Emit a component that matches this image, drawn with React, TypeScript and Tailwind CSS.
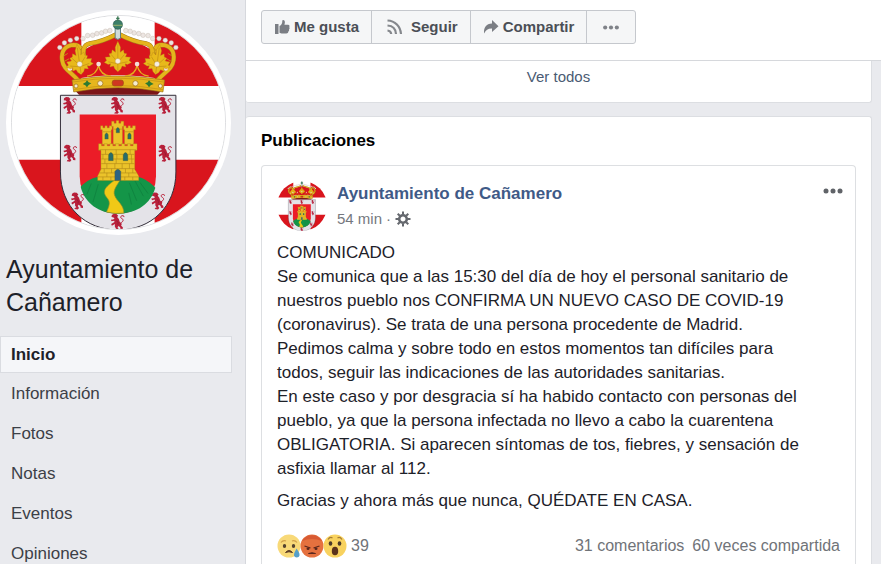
import type { ReactNode } from "react";
import clsx from "clsx";

const NAV_ITEMS = [
  "Inicio",
  "Información",
  "Fotos",
  "Notas",
  "Eventos",
  "Opiniones",
];

const POST_LINES = [
  "COMUNICADO",
  "Se comunica que a las 15:30 del día de hoy el personal sanitario de",
  "nuestros pueblo nos CONFIRMA UN NUEVO CASO DE COVID-19",
  "(coronavirus). Se trata de una persona procedente de Madrid.",
  "Pedimos calma y sobre todo en estos momentos tan difíciles para",
  "todos, seguir las indicaciones de las autoridades sanitarias.",
  "En este caso y por desgracia sí ha habido contacto con personas del",
  "pueblo, ya que la persona infectada no llevo a cabo la cuarentena",
  "OBLIGATORIA. Si aparecen síntomas de tos, fiebres, y sensación de",
  "asfixia llamar al 112.",
];

const LIONS = [
  [210, 314],
  [354, 314],
  [497, 314],
  [211, 458],
  [497, 458],
  [234, 602],
  [476, 602],
  [354, 666],
];

// left half of the crown's pearls, mirrored around x = 355
const PEARLS = [
  [180, 140],
  [194, 126],
  [212, 118],
  [231, 113],
  [250, 113],
  [264, 104],
  [279, 103],
  [292, 98],
  [306, 96],
  [318, 91],
  [331, 89],
];

function Lion({ x, y }: { x: number; y: number }) {
  return (
    <g transform={`translate(${x} ${y})`}>
      <path
        d="M-17 -21 L-11 -25 L-3 -24 L2 -19 L-1 -15 L4 -9 L7 0 L13 5 L11 11 L16 16 L16 22 L9 21 L8 16 L3 12 L0 16 L4 22 L0 26 L-10 25 L-8 21 L-4 20 L-8 14 L-8 6 L-17 11 L-19 6 L-14 3 L-9 0 L-10 -4 L-18 -2 L-20 -7 L-13 -8 L-9 -11 L-12 -14 L-18 -15 Z"
        fill="#b8203a"
      />
      <path
        d="M9 3 C19 -2 19 -8 12 -11 C7 -14 10 -20 17 -19 M17 -20 L20 -15"
        fill="none"
        stroke="#b8203a"
        strokeWidth="3"
      />
      <path d="M-6 -17 L-2 -14 M-3 -5 L2 2 L1 8" fill="none" stroke="#8a1a30" strokeWidth="2" />
    </g>
  );
}

function Leaf({ x, y, tilt }: { x: number; y: number; tilt: number }) {
  return (
    <g transform={`translate(${x} ${y}) rotate(${tilt})`}>
      <path
        d="M0 -60 L8 -42 L7 -27 L17 -34 L19 -24 L27 -22 L23 -13 L38 -12 L34 -2 L41 4 L29 10 L22 8 L24 18 L13 15 L9 24 L0 32 L-9 24 L-13 15 L-24 18 L-22 8 L-29 10 L-41 4 L-34 -2 L-38 -12 L-23 -13 L-27 -22 L-19 -24 L-17 -34 L-7 -27 L-8 -42 Z"
        fill="#e8b91b"
        stroke="#b98516"
        strokeWidth="1"
        strokeLinejoin="round"
      />
      <path
        d="M0 -50 V28 M0 4 L-20 -20 M0 4 L20 -20 M0 8 L-29 2 M0 8 L29 2"
        fill="none"
        stroke="#c18f15"
        strokeWidth="2"
      />
      <circle r="8" fill="#f6eee0" stroke="#b08a3a" strokeWidth="1" />
    </g>
  );
}

function HalfCrown() {
  return (
    <>
      <path
        d="M236 240 C218 216 190 206 187 178 C183 150 198 133 222 132 C243 132 246 147 250 172"
        fill="none"
        stroke="#a67c1a"
        strokeWidth="14"
      />
      <path
        d="M236 240 C218 216 190 206 187 178 C183 150 198 133 222 132 C243 132 246 147 250 172"
        fill="none"
        stroke="#e5b41c"
        strokeWidth="11"
      />
      <path
        d="M254 172 C248 150 251 132 270 128 C295 124 319 117 349 101"
        fill="none"
        stroke="#a67c1a"
        strokeWidth="14"
      />
      <path
        d="M254 172 C248 150 251 132 270 128 C295 124 319 117 349 101"
        fill="none"
        stroke="#e5b41c"
        strokeWidth="11"
      />
      <path
        d="M192 165 L204 158 M193 182 L208 174 M203 198 L218 188 M214 208 L227 201 M248 140 L236 154"
        stroke="#c18f15"
        strokeWidth="3"
      />
      <path
        d="M262 226 Q290 224 297 194 Q302 224 334 226"
        fill="none"
        stroke="#e3b01c"
        strokeWidth="4"
      />
      {PEARLS.map(([x, y]) => (
        <circle key={x} cx={x} cy={y} r="7" fill="#ece5e2" stroke="#b5aa9b" strokeWidth="1" />
      ))}
      <circle cx="297" cy="190" r="7" fill="#f3dcd8" />
      <circle cx="211" cy="203" r="7" fill="#f3dcd8" />
    </>
  );
}

function Crest({ className }: { className?: string }) {
  return (
    <svg viewBox="36 45 642 642" className={className} role="img" aria-label="Escudo de Cañamero">
      <path d="M36 45H678V687H36Z" fill="#fff" />
      <path
        d="M36 45H245V256H36Z M466 45H678V256H466Z M36 478H245V687H36Z M466 478H678V687H466Z"
        fill="#d9151d"
      />

      {/* shield */}
      <path
        d="M182 284H530V515C530 620 455 690 356 690C257 690 182 620 182 515Z"
        fill="#e4e3e8"
        stroke="#322c38"
        strokeWidth="3"
      />
      {LIONS.map(([x, y]) => (
        <Lion key={`${x}-${y}`} x={x} y={y} />
      ))}
      <path d="M240 342H470V528A115 113 0 0 1 240 528Z" fill="#ec1c27" />
      <path
        d="M243 560C260 541 281 532 300 529H412C432 533 454 547 468 563C455 610 413 641 355 641C296 641 255 608 243 560Z"
        fill="#149548"
      />
      <path
        d="M275 550L262 582 M296 552L280 606 M390 548L412 602 M406 541L432 588 M422 547L446 580 M388 578L396 613"
        fill="none"
        stroke="#0d7c3c"
        strokeWidth="2"
      />
      <path
        d="M344 541H361C352 556 340 570 345 585C351 603 374 614 373 639Q348 643 321 636C328 619 334 608 324 595C304 573 318 560 344 541Z"
        fill="#f0c917"
        stroke="#96912a"
        strokeWidth="2"
      />

      {/* castle */}
      <g fill="#ebc32a" stroke="#a37f17" strokeWidth="1">
        <path d="M303 376H310V382H316V376H323V382H329V376H338V388H335V432H308V388H303Z" />
        <path d="M372 376H380V382H386V376H393V382H399V376H408V388H403V432H375V388H372Z" />
        <path d="M336 362H344V368H350V360H358V368H364V362H373V378H369V432H341V378H336Z" />
        <path d="M297 430H306V436H314V430H323V436H331V430H340V436H348V430H358V436H366V430H376V436H384V430H393V436H401V430H413V450H406V507L418 527V541H294V527L304 507V450H297Z" />
      </g>
      <path
        d="M300 448H410 M305 462H405 M305 476H405 M305 490H405 M304 505H407 M299 518H412 M295 530H417 M318 448V462 M350 448V462 M392 448V462 M310 462V476 M352 462V476 M396 462V476 M316 476V490 M350 476V490 M397 476V490 M322 490V505 M346 490V505 M368 490V505 M390 490V505 M314 505V518 M336 505V518 M378 505V518 M400 505V518 M322 518V530 M388 518V530 M310 530V541 M334 530V541 M376 530V541 M400 530V541 M310 394H334 M376 394H402 M343 386H368"
        fill="none"
        stroke="#b48c18"
        strokeWidth="2"
      />
      <g fill="#286c69" stroke="#5c5a1d" strokeWidth="1">
        <path d="M316 416V403Q321 392 326 403V416Z M385 416V403Q390 392 395 403V416Z M350 397V386Q355 376 360 386V397Z" />
        <path d="M327 481V464Q334 449 341 464V481Z M371 481V464Q378 449 385 464V481Z" />
        <path d="M346 541V514Q355 500 364 514V541Z" fill="#2b6383" />
      </g>

      {/* crown */}
      <path d="M252 150Q268 132 355 107Q442 132 458 150L488 235Q355 212 222 235Z" fill="#d9151d" />
      <path d="M228 272Q355 248 484 272L474 282H238Z" fill="#7c1518" />
      <HalfCrown />
      <g transform="translate(710 0) scale(-1 1)">
        <HalfCrown />
      </g>
      <Leaf x={240} y={190} tilt={-8} />
      <Leaf x={473} y={190} tilt={8} />
      <Leaf x={355} y={181} tilt={0} />
      <path
        d="M217 238Q355 214 496 238L491 274Q355 248 222 274Z"
        fill="#e6b61d"
        stroke="#9c741a"
        strokeWidth="2"
      />
      <path
        d="M219 244Q355 221 494 244 M222 267Q355 242 491 267"
        fill="none"
        stroke="#c08e13"
        strokeWidth="2"
      />
      <rect x="338" y="238" width="34" height="18" rx="7" fill="#cf3721" stroke="#9a5a12" strokeWidth="2" />
      <path
        d="M249 250L258 245L262 239L267 245L275 248L267 253L262 260L257 254Z M437 248L445 245L449 239L454 245L463 250L454 254L449 260L444 253Z"
        fill="#2c7a31"
      />
      {[302, 408].map((x) => (
        <circle key={x} cx={x} cy="248" r="8" fill="#f5eccf" stroke="#9b6b12" strokeWidth="2" />
      ))}
      <circle cx="229" cy="256" r="6" fill="#f5eccf" stroke="#9b6b12" strokeWidth="2" />
      <circle cx="483" cy="256" r="6" fill="#f5eccf" stroke="#9b6b12" strokeWidth="2" />
      <path d="M347 81H363V112Q355 119 347 112Z" fill="#cfdbd9" stroke="#5e7c82" strokeWidth="3" />
      <circle cx="355" cy="71" r="14" fill="#3b7f68" stroke="#2d5a50" strokeWidth="2" />
      <path d="M341 73H369" stroke="#9db36a" strokeWidth="3" />
      <path d="M355 46V60 M350 52H360" stroke="#3d7a55" strokeWidth="4" />
    </svg>
  );
}

function Dots({ className }: { className?: string }) {
  return (
    <svg viewBox="0 0 20 6" className={className} fill="currentColor" aria-hidden="true">
      <circle cx="3" cy="3" r="2.5" />
      <circle cx="10" cy="3" r="2.5" />
      <circle cx="17" cy="3" r="2.5" />
    </svg>
  );
}

function LikeIcon() {
  return (
    <svg viewBox="0 0 16 16" className="size-4" fill="#7b7e84" aria-hidden="true">
      <path d="M1 5H4.5V15H1Z" />
      <path d="M5.5 7C7.500 6 8.300 4.500 8.300 2C8.300 .6 10.900 .6 10.900 3.300C10.900 4.300 10.600 5 10.400 5.700H14C15.700 5.700 15.900 7.500 15.200 8.100C15.900 8.900 15.600 10.200 15 10.500C15.300 11.400 14.900 12.300 14.300 12.600C14.400 13.900 13.500 14.500 12.300 14.500H8.500C7 14.500 6.500 13.800 5.500 13.700Z" />
    </svg>
  );
}

function FollowIcon() {
  return (
    <svg viewBox="0 0 17 16" className="h-4 w-[17px]" fill="none" stroke="#85888d" aria-hidden="true">
      <path d="M1.500 1.500C9 1.800 14.500 7.500 15 15" strokeWidth="2.200" />
      <path d="M1.500 6.500C6.500 6.800 9.700 10 10 15" strokeWidth="2.200" />
      <path d="M1.500 11.500C4 11.700 5 13 5.200 15" strokeWidth="2.200" />
    </svg>
  );
}

function ShareIcon() {
  return (
    <svg viewBox="0 0 16 16" className="size-4" fill="#7b7e84" aria-hidden="true">
      <path d="M9 1L15.500 7.200L9 13V9.600C5.300 9.400 2.800 11 1.200 14.500C.2 9 3.200 4.700 9 4.500Z" />
    </svg>
  );
}

function GearIcon() {
  return (
    <svg viewBox="-8 -8 16 16" className="size-4" fill="none" stroke="#65686e" aria-hidden="true">
      <circle r="3.800" strokeWidth="2.600" />
      <path
        d="M0 -4.500V-7.500 M0 4.500V7.500 M4.500 0H7.500 M-4.500 0H-7.500 M3.200 3.200L5.300 5.300 M-3.200 3.200L-5.300 5.300 M3.200 -3.200L5.300 -5.300 M-3.200 -3.200L-5.300 -5.300"
        strokeWidth="2"
      />
    </svg>
  );
}

function SadFace() {
  return (
    <svg viewBox="0 0 24 24" className="size-6" role="img" aria-label="Me entristece">
      <circle cx="12" cy="12" r="11.500" fill="#f8d978" />
      <path d="M4 8.500Q6 6 9 7 M15 7Q18 6 20 8.500" fill="none" stroke="#d0a049" strokeWidth="1.200" />
      <ellipse cx="7.500" cy="12" rx="1.700" ry="1.900" fill="#54432f" />
      <ellipse cx="16.500" cy="12" rx="1.700" ry="1.900" fill="#54432f" />
      <path d="M8.500 18.500Q12 14.500 15.500 18.500Q12 17 8.500 18.500Z" fill="#5a3a24" stroke="#5a3a24" />
      <path d="M19.500 14.500C21 17 23 19 22.500 21.500C22 24 17.500 24 17 21.500C16.700 19 18.500 17 19.500 14.500Z" fill="#569fc9" />
    </svg>
  );
}

function AngryFace() {
  return (
    <svg viewBox="0 0 24 24" className="size-6" role="img" aria-label="Me enfada">
      <circle cx="12" cy="12" r="11.500" fill="#e5713f" />
      <path d="M2 7A11.500 11.500 0 0 1 22 7Q12 3 2 7Z" fill="#d85a33" />
      <path d="M4.500 12L10.500 14 M19.500 12L13.500 14" stroke="#5a271d" strokeWidth="1.300" />
      <ellipse cx="8" cy="14.700" rx="1.500" ry="1.300" fill="#5a271d" />
      <ellipse cx="16" cy="14.700" rx="1.500" ry="1.300" fill="#5a271d" />
      <path d="M8.500 19.500Q12 18 15.500 19.500Z" fill="#5a271d" stroke="#5a271d" />
    </svg>
  );
}

function WowFace() {
  return (
    <svg viewBox="0 0 24 24" className="size-6" role="img" aria-label="Me asombra">
      <circle cx="12" cy="12" r="11.500" fill="#f8d25f" />
      <path d="M5 5.500Q7 2.500 9.500 4 M14.500 4Q17 2.500 19 5.500" fill="none" stroke="#a37a35" strokeWidth="1.200" />
      <ellipse cx="7.500" cy="9.500" rx="1.800" ry="2.200" fill="#4b3a2a" />
      <ellipse cx="16.500" cy="9.500" rx="1.800" ry="2.200" fill="#4b3a2a" />
      <ellipse cx="12" cy="17" rx="3.200" ry="4.300" fill="#5a321c" />
    </svg>
  );
}

function ActionButton({
  className,
  label,
  children,
}: {
  className?: string;
  label?: string;
  children: ReactNode;
}) {
  return (
    <button
      type="button"
      aria-label={label}
      className={clsx(
        "flex h-8 items-center border-r border-[#c5c8cd] last:border-r-0",
        className
      )}
    >
      {children}
    </button>
  );
}

function Sidebar() {
  return (
    <aside className="w-[246px] shrink-0 border-r border-[#d6d8dd] pt-[10px]">
      <div className="ml-[6px] size-[225px] rounded-full bg-white p-[5px]">
        <Crest className="size-full rounded-full border border-[#dcdde0]" />
      </div>
      <h1 className="mt-[18px] px-[6px] text-[25px] leading-[33px] text-[#1d2129]">
        Ayuntamiento de Cañamero
      </h1>
      <nav className="mt-[17px] mr-[13px]">
        <ul className="flex flex-col gap-[2px]">
          {NAV_ITEMS.map((item, i) => (
            <li key={item}>
              <a
                href="#"
                aria-current={i === 0 ? "page" : undefined}
                className={clsx(
                  "flex items-center border px-[10px] text-[17px] leading-6",
                  i === 0
                    ? "h-[37px] border-[#dadce1] bg-[#f5f6f9] font-bold text-[#1d2129]"
                    : "h-[38px] border-transparent text-[#3c4047]"
                )}
              >
                {item}
              </a>
            </li>
          ))}
        </ul>
      </nav>
    </aside>
  );
}

function Post() {
  return (
    <article className="mt-3 grow rounded-t-[4px] border border-b-0 border-[#dddfe2] px-[15px] pt-[15px]">
      <header className="flex">
        <Crest className="size-[50px] rounded-full" />
        <div className="ml-[10px] grow">
          <a href="#" className="block text-[17px] leading-[25px] font-bold text-[#3f5a87]">
            Ayuntamiento de Cañamero
          </a>
          <div className="flex items-center text-[15px] leading-[25px] text-[#75787e]">
            54 min<span className="mx-1">·</span>
            <GearIcon />
          </div>
        </div>
        <button
          type="button"
          aria-label="Más opciones de la publicación"
          className="mr-[-4px] flex h-5 items-center text-[#606368]"
        >
          <Dots className="h-[6px] w-[22px]" />
        </button>
      </header>
      <div className="mt-[10px] text-[17px] leading-6 text-[#1d2129]">
        <p className="whitespace-pre-line">{POST_LINES.join("\n")}</p>
        <p className="mt-2">Gracias y ahora más que nunca, QUÉDATE EN CASA.</p>
      </div>
      <footer className="mt-[21px] flex items-center text-base leading-6 text-[#707378]">
        <div className="flex -space-x-px">
          <SadFace />
          <AngryFace />
          <WowFace />
        </div>
        <span className="ml-1">39</span>
        <a href="#" className="ml-auto">
          31 comentarios
        </a>
        <a href="#" className="ml-2">
          60 veces compartida
        </a>
      </footer>
    </article>
  );
}

export default function App() {
  return (
    <div className="flex h-screen overflow-hidden bg-[#e9eaee] font-['Liberation_Sans',Arial,sans-serif]">
      <Sidebar />
      <main className="flex min-w-0 grow flex-col">
        <div className="shrink-0 border-b border-[#d6d8dc] bg-white px-[15px] pt-[10px] pb-4">
          <div className="flex w-fit rounded-[3px] border border-[#c5c8cd] bg-[#f5f6f7] text-[15px] font-bold text-[#4b4f56]">
            <ActionButton className="gap-1 px-3">
              <LikeIcon />
              Me gusta
            </ActionButton>
            <ActionButton className="gap-2 pr-3 pl-[14px]">
              <FollowIcon />
              Seguir
            </ActionButton>
            <ActionButton className="gap-1 px-3">
              <ShareIcon />
              Compartir
            </ActionButton>
            <ActionButton className="px-[15px] text-[#7f8288]" label="Más">
              <Dots className="h-[5px] w-[18px]" />
            </ActionButton>
          </div>
        </div>
        <div className="mr-[9px] shrink-0 rounded-b-[3px] border-r border-b border-[#dcdee2] bg-white pt-1 pb-[13px] text-center text-[15px] leading-6">
          <a href="#" className="text-[#4a5b73]">
            Ver todos
          </a>
        </div>
        <section className="mt-[13px] mr-[9px] flex grow flex-col rounded-t-[3px] border-t border-r border-[#dcdee2] bg-white px-[15px] pt-3">
          <h2 className="text-[17px] leading-6 font-bold text-black">Publicaciones</h2>
          <Post />
        </section>
      </main>
    </div>
  );
}
